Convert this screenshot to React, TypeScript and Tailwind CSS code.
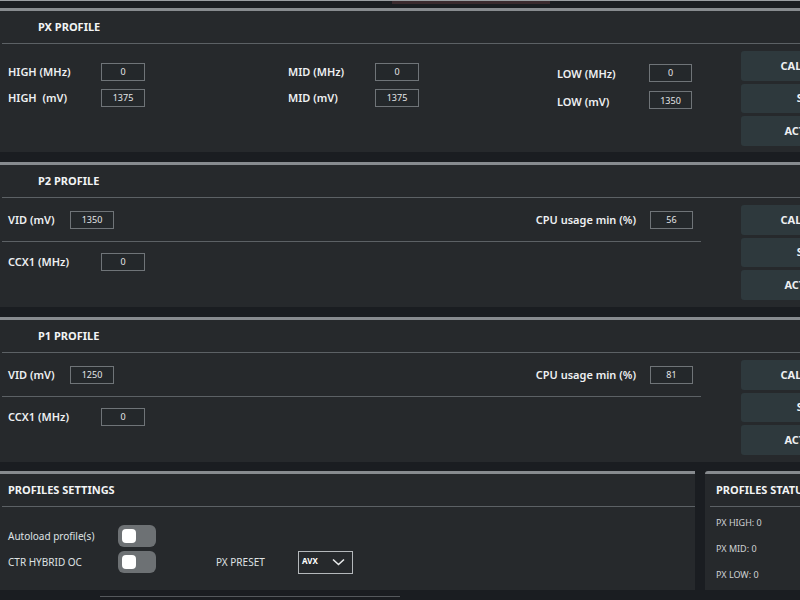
import React from 'react';

const font = { fontFamily: '"Noto Sans", "Open Sans", sans-serif' };

function Field({ value, width = 'w-[44px]' }: { value: string; width?: string }) {
  return (
    <div
      className={`${width} h-[18px] border border-[#6f7478] bg-[#24282b] flex items-center justify-center text-[9px] text-[#e4e6e8]`}
    >
      {value}
    </div>
  );
}

function Label({ children, className = '' }: { children: React.ReactNode; className?: string }) {
  return <span className={`text-[11px] font-semibold text-[#eef0f2] whitespace-nowrap ${className}`}>{children}</span>;
}

function Buttons() {
  return (
    <div className="w-[138px] shrink-0 flex flex-col gap-[3px] pt-[7px]">
      {['CALIBRATE', 'SAVE', 'ACTIVATE'].map((t, i) => (
        <div
          key={t}
          className={`${i === 1 ? 'h-[29px]' : 'h-[30px]'} rounded-[3px] bg-[#2e393d] flex items-center justify-center text-[11px] font-bold text-[#eef0f2]`}
        >
          {t}
        </div>
      ))}
    </div>
  );
}

function CardHeader({ title, indent = 'pl-[38px]' }: { title: string; indent?: string }) {
  return (
    <>
      <div className={`h-[32px] flex items-center ${indent}`}>
        <span className="text-[11px] font-bold text-[#f2f4f5] whitespace-nowrap">{title}</span>
      </div>
      <div className="h-px bg-[#5c6165] ml-[2px]" />
    </>
  );
}

function PxProfile() {
  return (
    <div className="bg-[#26292c] border-t-[3px] border-[#878b8f] h-[144px] flex flex-col">
      <CardHeader title="PX PROFILE" />
      <div className="flex flex-1">
        <div className="w-[741px] shrink-0 flex pl-[8px] pt-[19px]">
          <div className="w-[280px] flex flex-col gap-[8px]">
            <div className="flex items-center"><Label className="w-[93px]">HIGH (MHz)</Label><Field value="0" /></div>
            <div className="flex items-center"><Label className="w-[93px]">HIGH&nbsp;&nbsp;(mV)</Label><Field value="1375" /></div>
          </div>
          <div className="w-[269px] flex flex-col gap-[8px]">
            <div className="flex items-center"><Label className="w-[87px]">MID (MHz)</Label><Field value="0" /></div>
            <div className="flex items-center"><Label className="w-[87px]">MID (mV)</Label><Field value="1375" /></div>
          </div>
          <div className="flex flex-col gap-[8px]">
            <div className="flex items-center"><Label className="w-[92px] pt-[3px]">LOW (MHz)</Label><Field value="0" width="w-[43px]" /></div>
            <div className="flex items-center"><Label className="w-[92px] pt-[3px]">LOW (mV)</Label><Field value="1350" width="w-[43px]" /></div>
          </div>
        </div>
        <Buttons />
      </div>
    </div>
  );
}

function PProfile({ title, vid, cpu }: { title: string; vid: string; cpu: string }) {
  return (
    <div className="bg-[#26292c] border-t-[3px] border-[#878b8f] h-[145px] flex flex-col">
      <CardHeader title={title} />
      <div className="flex flex-1">
        <div className="w-[741px] shrink-0 flex flex-col pt-[13px]">
          <div className="w-[701px] flex items-center pl-[8px]">
            <Label className="w-[62px]">VID (mV)</Label>
            <Field value={vid} />
            <Label className="ml-auto mr-[14px]">CPU usage min (%)</Label>
            <div className="mr-[8px]"><Field value={cpu} width="w-[43px]" /></div>
          </div>
          <div className="w-[699px] h-px bg-[#5c6165] ml-[2px] mt-[12px]" />
          <div className="flex items-center pl-[8px] mt-[11px]">
            <Label className="w-[93px]">CCX1 (MHz)</Label>
            <Field value="0" />
          </div>
        </div>
        <Buttons />
      </div>
    </div>
  );
}

function Toggle() {
  return (
    <div className="w-[38px] h-[22px] rounded-[6px] bg-[#6d7174] flex items-center pl-[4px]">
      <div className="w-[14px] h-[14px] rounded-[4px] bg-white" />
    </div>
  );
}

function Settings() {
  return (
    <div className="flex gap-[10px] h-[119px]">
      <div className="w-[695px] shrink-0 bg-[#26292c] border-t-[3px] border-[#878b8f] flex flex-col">
        <CardHeader title="PROFILES SETTINGS" indent="pl-[8px]" />
        <div className="flex flex-col pl-[8px] pt-[18px] gap-[4px]">
          <div className="flex items-center h-[22px]">
            <span className="w-[110px] text-[10px] text-[#dfe2e4]">Autoload profile(s)</span>
            <Toggle />
          </div>
          <div className="flex items-center h-[22px]">
            <span className="w-[110px] text-[10px] text-[#dfe2e4]">CTR HYBRID OC</span>
            <Toggle />
            <span className="ml-[60px] w-[82px] text-[10px] text-[#dfe2e4]">PX PRESET</span>
            <div className="w-[55px] h-[23px] border border-[#b4b8bb] flex items-center pl-[3px] gap-[14px]">
              <span className="text-[8px] font-bold text-white -mt-[3px]">AVX</span>
              <svg width="13" height="8" viewBox="0 0 13 8" fill="none">
                <path d="M1 1.5 L6.5 6.5 L12 1.5" stroke="#e8eaeb" strokeWidth="1.6" />
              </svg>
            </div>
          </div>
        </div>
      </div>
      <div className="w-[200px] shrink-0 bg-[#26292c] border-t-[3px] border-[#878b8f] rounded-tl-[3px] flex flex-col">
        <div className="h-[32px] flex items-center pl-[11px]">
          <span className="text-[11px] font-bold text-[#f2f4f5] whitespace-nowrap">PROFILES STATUS</span>
        </div>
        <div className="h-px bg-[#5c6165] ml-[5px]" />
        <div className="flex flex-col pl-[11px] pt-[9px] gap-[12px] text-[9px] text-[#cfd2d4]">
          <span className="h-[14px]">PX HIGH: 0</span>
          <span className="h-[14px]">PX MID: 0</span>
          <span className="h-[14px]">PX LOW: 0</span>
        </div>
      </div>
    </div>
  );
}

export default function App() {
  return (
    <div className="w-[800px] h-[600px] overflow-hidden bg-[#1a1d21]" style={font}>
      <div className="h-px bg-[#9a9ea2]" />
      <div className="h-[7px] flex">
        <div className="ml-[392px] w-[158px] h-[3px] bg-[#3a2a2e]" />
      </div>
      <PxProfile />
      <div className="h-[10px]" />
      <PProfile title="P2 PROFILE" vid="1350" cpu="56" />
      <div className="h-[10px]" />
      <PProfile title="P1 PROFILE" vid="1250" cpu="81" />
      <div className="h-[9px]" />
      <Settings />
      <div className="h-[6px]" />
      <div className="h-[1px] flex">
        <div className="ml-[100px] w-[300px] bg-[#55595d]" />
      </div>
    </div>
  );
}
